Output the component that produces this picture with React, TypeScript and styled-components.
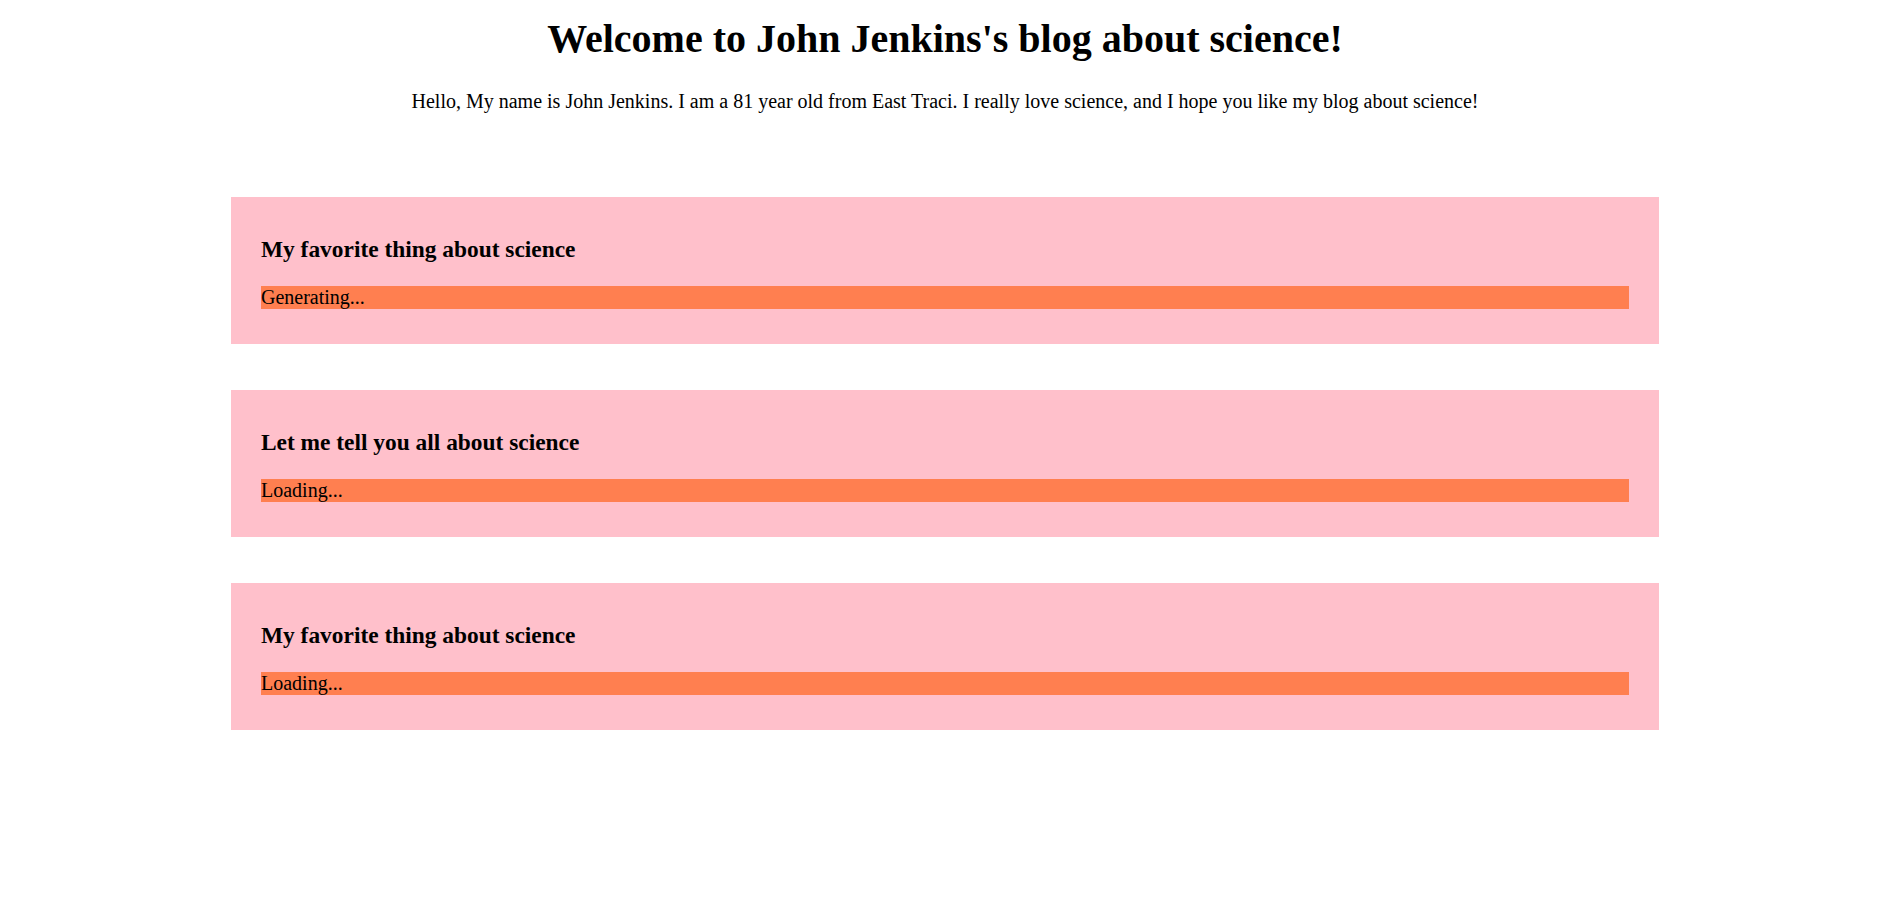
import React from "react";
import styled, { createGlobalStyle } from "styled-components";

const Global = createGlobalStyle`
  html, body { margin: 0; padding: 0; background: #fff; }
  body { font-family: "Liberation Serif", "Times New Roman", serif; color: #000; }
`;

const Page = styled.div`
  display: flex;
  flex-direction: column;
  padding: 16px 0 80px;
`;

const Header = styled.header`
  display: flex;
  flex-direction: column;
  align-items: center;
  padding-left: 8px;
`;

const Title = styled.h1`
  margin: 0;
  font-size: 40px;
  line-height: 46px;
  font-weight: 700;
`;

const Intro = styled.p`
  margin: 28px 0 0;
  font-size: 20px;
  line-height: 22px;
`;

const Posts = styled.main`
  display: flex;
  flex-direction: column;
  gap: 46px;
  padding: 85px 0 0 231px;
`;

const Card = styled.section`
  width: 1428px;
  box-sizing: border-box;
  background: #ffc0cb;
  padding: 17px 30px;
`;

const CardTitle = styled.h3`
  margin: 22px 0 24px;
  font-size: 23.4px;
  line-height: 26px;
  font-weight: 700;
`;

const Body = styled.div`
  margin: 0 0 18px;
  background: #ff7f50;
  font-size: 20px;
  line-height: 23px;
`;

const posts = [
  { title: "My favorite thing about science", body: "Generating..." },
  { title: "Let me tell you all about science", body: "Loading..." },
  { title: "My favorite thing about science", body: "Loading..." },
];

export default function App() {
  return (
    <>
      <Global />
      <Page>
        <Header>
          <Title>Welcome to John Jenkins's blog about science!</Title>
          <Intro>
            Hello, My name is John Jenkins. I am a 81 year old from East Traci. I really love science, and I hope you like my blog about science!
          </Intro>
        </Header>
        <Posts>
          {posts.map((p, i) => (
            <Card key={i}>
              <CardTitle>{p.title}</CardTitle>
              <Body>{p.body}</Body>
            </Card>
          ))}
        </Posts>
      </Page>
    </>
  );
}
